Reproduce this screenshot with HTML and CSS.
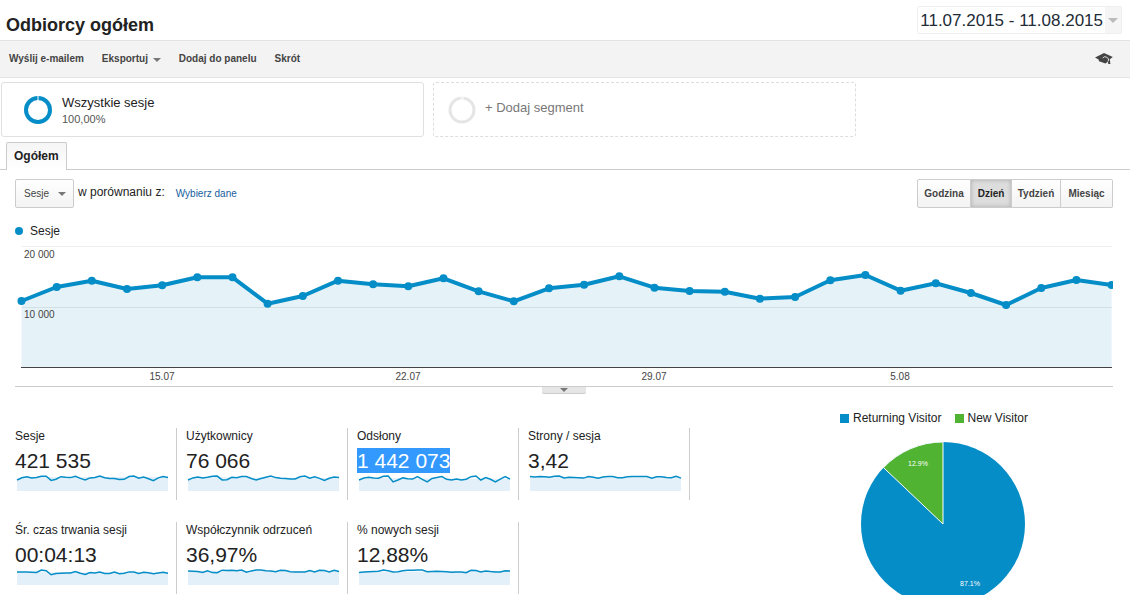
FILE: index.html
```html
<!DOCTYPE html>
<html lang="pl">
<head>
<meta charset="utf-8">
<title>Odbiorcy ogółem</title>
<link rel="stylesheet" href="styles.css">
</head>
<body>
<header class="header">
  <h1 class="title">Odbiorcy ogółem</h1>
  <button class="date-range" type="button"><span class="date-text">11.07.2015 - 11.08.2015</span><span class="date-arrow"><i class="caret caret-light"></i></span></button>
</header>

<nav class="toolbar">
  <button class="tool" type="button">Wyślij e-mailem</button>
  <button class="tool" type="button">Eksportuj <i class="caret"></i></button>
  <button class="tool" type="button">Dodaj do panelu</button>
  <button class="tool" type="button">Skrót</button>
  <button class="tool tool-education" type="button" aria-label="Edukacja">
    <svg class="cap" viewBox="0 0 20 14"><path fill="#444" d="M1 5.500 10 1 18.800 5 15.800 7.200 16.400 12H14.200L14 9.400 11.500 11.600 5 9.200 4.600 7.400Z"/><path fill="none" stroke="#f3f3f3" stroke-width=".9" d="M8.800 6Q10.400 4 12.200 5L14.600 6.800 14.200 9.400"/></svg>
  </button>
</nav>

<section class="segments">
  <button class="segment" type="button">
    <svg class="ring" viewBox="0 0 28 28"><circle cx="14" cy="14" r="12" fill="none" stroke="#058dc7" stroke-width="4"/><path stroke="#fff" d="M14 0V5"/></svg>
    <span class="segment-text"><span class="segment-name">Wszystkie sesje</span><span class="segment-share">100,00%</span></span>
  </button>
  <button class="segment segment-add" type="button">
    <svg class="ring" viewBox="0 0 28 28"><circle cx="14" cy="14" r="12" fill="none" stroke="#e5e5e5" stroke-width="3"/><path stroke="#fff" d="M13 0V5M15 0V5"/></svg>
    <span class="segment-name">+ Dodaj segment</span>
  </button>
</section>

<div class="tabs"><button class="tab" type="button">Ogółem</button></div>

<main class="report">
  <div class="controls">
    <div class="select-box">
      <select class="select" id="metric"><option>Sesje</option></select><i class="caret"></i>
    </div>
    <label class="compare" for="metric">w porównaniu z:</label>
    <a class="link" href="#">Wybierz dane</a>
    <div class="periods">
      <button class="period" type="button">Godzina</button>
      <button class="period period-active" type="button">Dzień</button>
      <button class="period" type="button">Tydzień</button>
      <button class="period" type="button">Miesiąc</button>
    </div>
  </div>

  <div class="chart-legend"><i class="dot"></i>Sesje</div>
  <svg class="chart" viewBox="0 0 1098 140">
    <path stroke="#eee" d="M7 .5H1097"/>
    <path fill="#e5f2f8" d="M6.500 55 41.700 41 76.800 34.700 112 43 147.200 39.300 182.300 31.300 217.500 31.300 252.600 57.700 287.800 50 323 34.700 358.100 38.300 393.300 40.300 428.500 32.300 463.600 45.300 498.800 55.300 534 42.300 569.100 38.700 604.300 30.300 639.500 41.700 674.600 45 709.800 45.700 744.900 52.700 780.100 51 815.300 34.300 850.400 29 885.600 44.700 920.800 37.300 955.900 47 991.100 59 1026.300 42 1061.400 34 1096.600 39V121H6.500Z"/>
    <path stroke="#d2dfe5" d="M7 61.500H1097"/>
    <path stroke="#444" d="M6 121.500H1097"/>
    <g class="series">
    <polyline points="6.500,55 41.700,41 76.800,34.700 112,43 147.200,39.300 182.300,31.300 217.500,31.300 252.600,57.700 287.800,50 323,34.700 358.100,38.300 393.300,40.300 428.500,32.300 463.600,45.300 498.800,55.300 534,42.300 569.100,38.700 604.300,30.300 639.500,41.700 674.600,45 709.800,45.700 744.900,52.700 780.100,51 815.300,34.300 850.400,29 885.600,44.700 920.800,37.300 955.900,47 991.100,59 1026.300,42 1061.400,34 1096.600,39"/>
    <path class="points" d="M6.500 55h0M41.700 41h0M76.800 34.700h0M112 43h0M147.200 39.300h0M182.300 31.300h0M217.500 31.300h0M252.600 57.700h0M287.800 50h0M323 34.700h0M358.100 38.300h0M393.300 40.300h0M428.500 32.300h0M463.600 45.300h0M498.800 55.300h0M534 42.300h0M569.100 38.700h0M604.300 30.300h0M639.500 41.700h0M674.600 45h0M709.800 45.700h0M744.900 52.700h0M780.100 51h0M815.300 34.300h0M850.400 29h0M885.600 44.700h0M920.800 37.300h0M955.900 47h0M991.100 59h0M1026.300 42h0M1061.400 34h0M1096.600 39h0"/>
    </g>
    <g class="axis">
      <text x="9" y="12">20 000</text><text x="9" y="72">10 000</text>
      <g text-anchor="middle"><text x="147" y="134">15.07</text><text x="393" y="134">22.07</text><text x="639" y="134">29.07</text><text x="885" y="134">5.08</text></g>
    </g>
  </svg>
  <div class="divider"><button class="handle" type="button" aria-label="Rozwiń"><i class="caret caret-small"></i></button></div>

  <div class="summary">
    <div class="metrics">
      <div class="metric"><span class="metric-name">Sesje</span><span class="metric-value"><span>421 535</span></span>
        <svg class="spark" viewBox="0 0 31 16" preserveAspectRatio="none"><path class="area" d="M0 5 2 2 31 2V16H0Z"/><polyline points="0,5 1,2.700 2,1.700 3,3 4,2.500 5,1.200 6,1.200 7,5.400 8,4.200 9,1.700 10,2.300 11,2.600 12,1.300 13,3.400 14,5 15,2.900 16,2.400 17,1 18,2.800 19,3.400 20,3.500 21,4.600 22,4.300 23,1.600 24,1 25,3.300 26,2.100 27,3.700 28,5.600 29,2.900 30,1.600 31,2.400"/></svg></div>
      <div class="metric"><span class="metric-name">Użytkownicy</span><span class="metric-value"><span>76 066</span></span>
        <svg class="spark" viewBox="0 0 31 16" preserveAspectRatio="none"><path class="area" d="M0 5 2 2 31 3V16H0Z"/><polyline points="0,5 1,2.900 2,1.900 3,3 4,2.200 5,1.200 6,1.100 7,4.900 8,4.700 9,2.300 10,2.800 11,1.500 12,1.600 13,3.500 14,5 15,3.500 16,2.300 17,1 18,2.600 19,3.200 20,3.400 21,4 22,4 23,1.700 24,1 25,3.100 26,1.800 27,3.400 28,5.500 29,3.200 30,2 31,2.400"/></svg></div>
      <div class="metric"><span class="metric-name">Odsłony</span><span class="metric-value"><span class="selected">1 442 073</span></span>
        <svg class="spark" viewBox="0 0 31 16" preserveAspectRatio="none"><path class="area" d="M0 5 2 3 31 4V16H0Z"/><polyline points="0,5 1,3 2,2.300 3,2.900 4,3.200 5,1.200 6,1 7,6.900 8,5 9,2.900 10,3.700 11,4.100 12,1.500 13,4.300 14,6.800 15,3.500 16,2.500 17,1.500 18,4.300 19,4.900 20,4 21,4.900 22,4.200 23,1.700 24,1 25,5 26,2.500 27,4.300 28,6.900 29,4.100 30,1.500 31,4"/></svg></div>
      <div class="metric"><span class="metric-name">Strony / sesja</span><span class="metric-value"><span>3,42</span></span>
        <svg class="spark" viewBox="0 0 31 16" preserveAspectRatio="none"><path class="area" d="M0 2 31 2.500V16H0Z"/><polyline points="0,1.600 1,1.900 2,1.500 3,1.700 4,2.200 5,1.200 6,1 7,3 8,2.300 9,2.500 10,2.800 11,3.100 12,1.600 13,2.300 14,3.200 15,2.100 16,1.400 17,1.600 18,2.800 19,2.800 20,1.800 21,1.600 22,1.600 23,1.500 24,1.600 25,3.200 26,1.700 27,1.700 28,2.600 29,2.700 30,1.300 31,3.100"/></svg></div>
      <div class="metric"><span class="metric-name">Śr. czas trwania sesji</span><span class="metric-value"><span>00:04:13</span></span>
        <svg class="spark" viewBox="0 0 31 16" preserveAspectRatio="none"><path class="area" d="M0 3 31 4V16H0Z"/><polyline points="0,3 1,3 2,3 3,3.200 4,3.500 5,1.100 6,1.700 7,5.800 8,4.600 9,4.200 10,4 11,4 12,2.500 13,4.200 14,5.500 15,3.500 16,3.900 17,3 18,4.500 19,4.500 20,3.100 21,4.700 22,4.200 23,2.900 24,3.100 25,4.500 26,3.300 27,3.800 28,4.800 29,4.100 30,3.300 31,4.300"/></svg></div>
      <div class="metric"><span class="metric-name">Współczynnik odrzuceń</span><span class="metric-value"><span>36,97%</span></span>
        <svg class="spark" viewBox="0 0 31 16" preserveAspectRatio="none"><path class="area" d="M0 2 31 2V16H0Z"/><polyline points="0,2.100 1,2.200 2,2.600 3,3.500 4,1.700 5,3.600 6,3.700 7,1.200 8,1.600 9,1.200 10,1.700 11,1.100 12,3.200 13,1.900 14,1 15,1.100 16,1.700 17,1.900 18,2.700 19,1.200 20,1.500 21,2.800 22,3.100 23,3 24,3 25,1.600 26,2.900 27,1.300 28,1.500 29,3 30,1.200 31,2.500"/></svg></div>
      <div class="metric"><span class="metric-name">% nowych sesji</span><span class="metric-value"><span>12,88%</span></span>
        <svg class="spark" viewBox="0 0 31 16" preserveAspectRatio="none"><path class="area" d="M0 3 31 2V16H0Z"/><polyline points="0,3.400 1,3.100 2,2.700 3,2.500 4,2.300 5,1 6,1.800 7,3 8,2.800 9,1.800 10,1.200 11,1.200 12,1.100 13,1.100 14,2.800 15,2.400 16,2.300 17,2.400 18,2.700 19,3.200 20,2.900 21,3 22,3.700 23,1.300 24,1.500 25,3 26,1.900 27,2.600 28,3 29,2.900 30,1.700 31,1.900"/></svg></div>
    </div>
    <div class="visitors">
      <div class="pie-legend"><span class="key"><i class="swatch"></i>Returning Visitor</span><span class="key"><i class="swatch swatch-new"></i>New Visitor</span></div>
      <svg class="pie" viewBox="0 0 166 166">
        <circle cx="83" cy="83" r="82" fill="#058dc7"/>
        <path fill="#50b432" stroke="#fff" d="M83 83 23.500 26.600A82 82 0 0 1 83 1Z"/>
        <g class="pie-label"><text x="58" y="25">12.9%</text><text x="110" y="145">87.1%</text></g>
      </svg>
    </div>
  </div>
</main>
</body>
</html>
```

FILE: styles.css
```css
* { box-sizing: border-box; }
body {
  margin: 0;
  height: 100vh;
  overflow: hidden;
  background: #fff;
  color: #222;
  font: 12px/16px "Liberation Sans", Arial, sans-serif;
}
button, select { font: inherit; color: inherit; margin: 0; cursor: pointer; }
svg { display: block; }

.caret {
  display: inline-block;
  border: 4px solid transparent;
  border-top-color: #777;
  border-bottom: 0;
}
.caret-light { border-width: 5px; border-bottom: 0; border-top-color: #bbb; }
.caret-small { border-width: 4px; border-bottom: 0; }

.header {
  display: flex;
  justify-content: space-between;
  align-items: flex-start;
  height: 40px;
  padding: 6px 8px 0 6px;
}
.title { margin: 8px 0 0; font-size: 18px; line-height: 22px; }
.date-range {
  display: flex;
  height: 28px;
  padding: 0;
  border: 1px solid #eee;
  border-radius: 2px;
  background: #fff;
  color: #222b36;
  font-size: 17px;
  line-height: 28px;
}
.date-text { padding: 0 2px; }
.date-arrow { display: flex; align-items: center; justify-content: center; width: 16px; background: #f5f5f5; }

.toolbar {
  display: flex;
  align-items: center;
  gap: 18px;
  height: 38px;
  padding: 0 16px 0 9px;
  border: solid #e3e3e3;
  border-width: 1px 0;
  background: #f3f3f3;
}
.tool { padding: 0; border: 0; background: none; color: #444; font-size: 10px; font-weight: bold; }
.tool .caret { margin-left: 2px; }
.tool-education { margin-left: auto; }
.cap { width: 20px; height: 14px; }

.segments {
  display: grid;
  grid-template-columns: repeat(2, minmax(0, 423px));
  gap: 9px;
  padding: 4px 1px 5px;
}
.segment {
  display: flex;
  align-items: center;
  gap: 10px;
  height: 55px;
  padding: 0 22px;
  border: 1px solid #e0e0e0;
  border-radius: 3px;
  background: #fff;
  text-align: left;
}
.segment-add { gap: 9px; padding: 0 14px; border: 1px dashed #ddd; color: #777; }
.segment-add .segment-name { padding-bottom: 4px; }
.segment-text { display: flex; flex-direction: column; padding-top: 3px; }
.segment-name { font-size: 13px; }
.segment-share { color: #555; font-size: 11px; }
.ring { width: 28px; height: 28px; }

.tabs { display: flex; height: 28px; padding-left: 6px; border-bottom: 1px solid #ccc; }
.tab {
  height: 28px;
  padding: 0 7px 2px;
  border: 1px solid #ccc;
  border-bottom: 0;
  border-radius: 2px 2px 0 0;
  background: linear-gradient(#f5f5f5, #fff);
  font-weight: bold;
}

.report { padding: 9px 17px 0 15px; }
.controls { display: flex; align-items: center; height: 29px; }
.select-box { display: grid; align-items: center; height: 29px; }
.select-box > * { grid-area: 1 / 1; }
.select-box .caret { justify-self: end; margin-right: 8px; pointer-events: none; }
.select {
  appearance: none;
  width: 59px;
  height: 29px;
  padding: 0 8px;
  border: 1px solid #ccc;
  border-radius: 2px;
  background: linear-gradient(#fff, #f3f3f3);
  color: #444;
  font-size: 10px;
}
.compare { margin: 0 11px 0 4px; padding-bottom: 4px; }
.link { color: #15609e; font-size: 10px; text-decoration: none; }
.periods { display: grid; grid-template-columns: 54px 41px 49px 52px; margin-left: auto; }
.period {
  height: 29px;
  padding: 0;
  border: 1px solid #ccc;
  border-left-width: 0;
  background: linear-gradient(#fff, #f3f3f3);
  color: #444;
  font-size: 10px;
  font-weight: bold;
}
.period:first-child { border-left-width: 1px; border-radius: 2px 0 0 2px; }
.period:last-child { border-radius: 0 2px 2px 0; }
.period-active { background: #ddd; color: #222; box-shadow: inset 0 0 4px #aaa; }

.chart-legend { display: flex; align-items: center; gap: 7px; height: 38px; padding-top: 8px; }
.dot { width: 8px; height: 8px; border-radius: 50%; background: #058dc7; }
.chart { width: 100%; }
.series { fill: none; stroke: #058dc7; stroke-width: 4; stroke-linejoin: round; }
.points { stroke-width: 8; stroke-linecap: round; }
.axis { fill: #444; font-size: 10px; }
.divider { display: flex; justify-content: center; height: 8px; border-top: 1px solid #ccc; }
.handle {
  display: flex;
  justify-content: center;
  width: 44px;
  height: 7px;
  padding: 1px 0 0;
  border: 0;
  border-bottom: 1px solid #ccc;
  border-radius: 0 0 2px 2px;
  background: #e6e6e6;
}

.summary { display: flex; justify-content: space-between; padding-top: 16px; }
.metrics {
  display: grid;
  grid-template-columns: repeat(4, 171px);
  align-content: start;
  row-gap: 22px;
  padding-top: 18px;
  margin-left: -9px;
}
.metric {
  display: flex;
  flex-direction: column;
  height: 72px;
  padding-left: 9px;
  border-right: 1px solid #ccc;
}
.metric-value { font-size: 21px; line-height: 25px; padding-top: 4px; }
.selected { display: inline-block; background: #39f; color: #fff; }
.spark { width: 151px; height: 16px; margin: 2px 0 0 2px; overflow: visible; }
.spark polyline { fill: none; stroke: #058dc7; stroke-width: 1.500; vector-effect: non-scaling-stroke; }
.area { fill: #e3f0f9; }

.visitors { display: flex; flex-direction: column; align-items: flex-start; width: 273px; }
.pie-legend { display: flex; gap: 13px; }
.key { display: flex; align-items: center; gap: 4px; white-space: nowrap; }
.swatch { width: 9px; height: 9px; background: #058dc7; }
.swatch-new { background: #50b432; }
.pie { width: 166px; height: 166px; margin: 15px 0 0 20px; }
.pie-label { fill: #fff; font-size: 7px; text-anchor: middle; }
```
